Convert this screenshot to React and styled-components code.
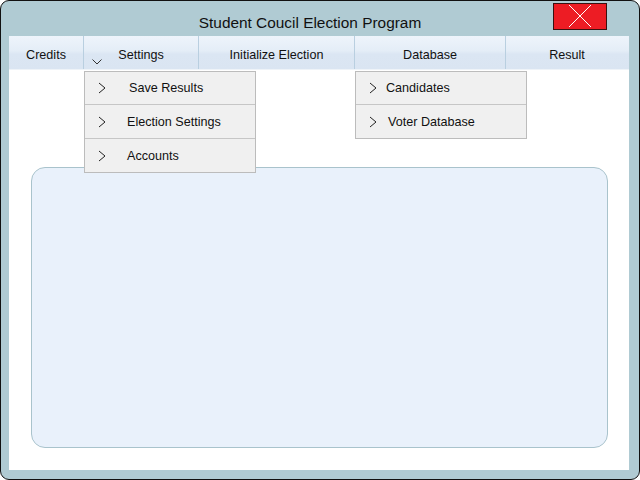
import React from "react";
import styled, { createGlobalStyle } from "styled-components";

const GlobalStyle = createGlobalStyle`
  html, body {
    margin: 0;
    padding: 0;
    background: #ffffff;
  }
  body {
    font-family: "Liberation Sans", Arial, sans-serif;
  }
`;

const settingsItems = ["Save Results", "Election Settings", "Accounts"];
const databaseItems = ["Candidates", "Voter Database"];

function Chevron() {
  return (
    <svg width="8" height="12" viewBox="0 0 8 12">
      <path d="M1 1 L7 6 L1 11" fill="none" stroke="#222" strokeWidth="1" />
    </svg>
  );
}

function ChevronDown() {
  return (
    <svg width="10" height="6" viewBox="0 0 10 6">
      <path d="M0.5 0.5 L5 5 L9.5 0.5" fill="none" stroke="#333" strokeWidth="1" />
    </svg>
  );
}

function Dropdown({ items, textOffset }) {
  return (
    <DropList>
      {items.map((item, i) => (
        <DropItem key={item}>
          <ChevronBox>
            <Chevron />
          </ChevronBox>
          <DropText $offset={textOffset[i]}>{item}</DropText>
        </DropItem>
      ))}
    </DropList>
  );
}

export default function App() {
  return (
    <>
      <GlobalStyle />
      <Window>
        <TitleBar>
          <Title>Student Coucil Election Program</Title>
          <CloseButton aria-label="close">
            <svg width="24" height="24" viewBox="0 0 24 24">
              <path d="M1 1 L23 23 M23 1 L1 23" stroke="#fff" strokeWidth="1" />
            </svg>
          </CloseButton>
        </TitleBar>
        <Content>
          <MenuBar>
            <MenuItem $width={75}>Credits</MenuItem>
            <MenuItem $width={115}>
              <DownMark>
                <ChevronDown />
              </DownMark>
              Settings
              <Dropdown items={settingsItems} textOffset={[31, 29, 29]} />
            </MenuItem>
            <MenuItem $width={156}>Initialize Election</MenuItem>
            <MenuItem $width={151}>
              Database
              <Dropdown items={databaseItems} textOffset={[17, 19]} />
            </MenuItem>
            <MenuItem $width={122} $last>
              Result
            </MenuItem>
          </MenuBar>
          <Panel />
        </Content>
      </Window>
    </>
  );
}

const Window = styled("div")`
  box-sizing: border-box;
  width: 640px;
  height: 480px;
  background: #b0cbd3;
  border: 1.5px solid #111;
  border-radius: 9px;
  padding: 1.5px 10px 9px 8px;
  display: flex;
  flex-direction: column;
`;

const TitleBar = styled("div")`
  height: 33.5px;
  display: flex;
  align-items: flex-start;
`;

const Title = styled("div")`
  flex: 1;
  text-align: center;
  padding-left: 58px;
  padding-top: 11px;
  font-size: 15.4px;
  color: #111;
`;

const CloseButton = styled("div")`
  box-sizing: border-box;
  width: 54px;
  height: 27px;
  margin-right: 22px;
  background: #ed1c24;
  border: 1px solid #3a1010;
  display: flex;
  align-items: center;
  justify-content: center;
`;

const Content = styled("div")`
  flex: 1;
  background: #ffffff;
  display: flex;
  flex-direction: column;
`;

const MenuBar = styled("div")`
  height: 33px;
  display: flex;
  background: linear-gradient(#eef4fb 0%, #e4edf7 45%, #dbe6f3 55%, #dae5f2 100%);
  border-bottom: 1px solid #eef3f8;
`;

const MenuItem = styled("div")`
  position: relative;
  box-sizing: border-box;
  width: ${(p) => p.$width}px;
  padding-top: 4px;
  display: flex;
  align-items: center;
  justify-content: center;
  font-size: 12.6px;
  color: #111;
  border-right: ${(p) => (p.$last ? "none" : "1px solid #b9cfe0")};
`;

const DownMark = styled("span")`
  position: absolute;
  left: 8px;
  top: 23px;
  line-height: 0;
`;

const DropList = styled("div")`
  position: absolute;
  top: 35px;
  left: 0;
  width: 172px;
  box-sizing: border-box;
  background: #f0f0f0;
  border: 1px solid #bcbcbc;
  z-index: 2;
`;

const DropItem = styled("div")`
  height: 33px;
  display: flex;
  align-items: center;
  border-top: 1px solid #c6c6c6;

  &:first-child {
    border-top: none;
    height: 32px;
  }
`;

const ChevronBox = styled("span")`
  width: 13px;
  padding-left: 13px;
  line-height: 0;
`;

const DropText = styled("span")`
  font-size: 12.6px;
  color: #111;
  padding-left: ${(p) => p.$offset - 13}px;
`;

const Panel = styled("div")`
  box-sizing: border-box;
  margin: 97px 0 0 22px;
  width: 577px;
  height: 281px;
  background: #e9f1fb;
  border: 1px solid #a9c3cc;
  border-radius: 14px;
`;
